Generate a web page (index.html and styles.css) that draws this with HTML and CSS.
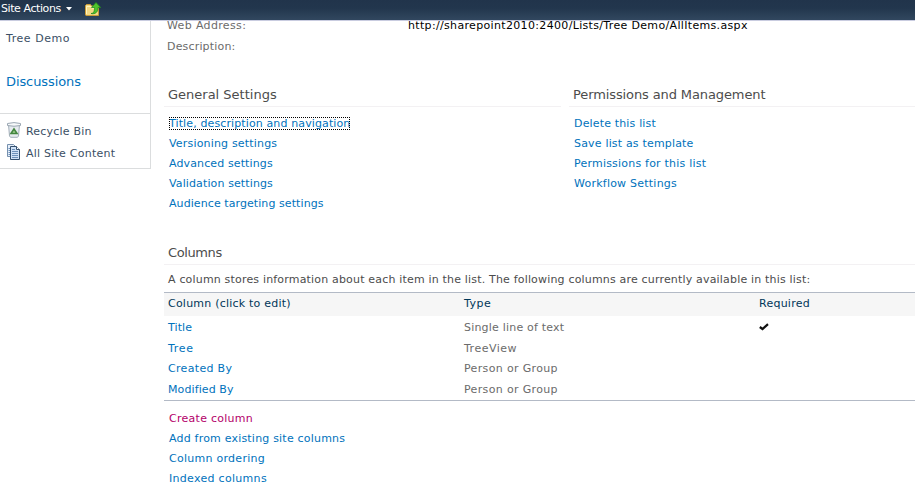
FILE: index.html
```html
<!DOCTYPE html>
<html lang="en">
<head>
<meta charset="utf-8">
<title>List Settings</title>
<link rel="stylesheet" href="styles.css">
</head>
<body>
<header class="ribbon">
  <span class="actions">Site Actions</span>
  <svg class="caret" width="6" height="4" viewBox="0 0 6 4"><path d="M0 0h6L3 3.5z" fill="#fff"/></svg>
  <svg class="up" width="16" height="16" viewBox="0 0 16 16">
    <path d="M.5 14V4.500L1.500 3.500H5.500L6.500 5H13.500V14.500H1z" fill="#f3d883" stroke="#c99b38"/>
    <path d="M1.500 13V5.500H6L7 7H12" fill="none" stroke="#fff3bd"/>
    <path d="M6 12.500C9 12.500 9.500 10 9.500 6.500H6.500L11 1.500 15.700 6.500H13C13 11 10.500 13.500 6 12.500z" fill="#4fc22b" stroke="#228c1e" stroke-width=".8"/>
  </svg>
</header>
<div class="page">
  <nav class="side">
    <a class="demo"><span class="t-demo">Tree Demo</span></a>
    <a class="disc"><span class="t-disc">Discussions</span></a>
    <div class="tools">
      <a class="tool">
        <svg width="16" height="16" viewBox="0 0 16 16">
          <path d="M2.500 2.500L3.500 14 4.500 15.300H11.500L12.500 14 13.500 2.500z" fill="#e6ebef" stroke="#a3afba"/>
          <path d="M1.500 1.500Q8-.3 14.500 1.500V3.500Q8 5 1.500 3.500z" fill="#f7f9fa" stroke="#9aa6b2"/>
          <path d="M5 11.500L8 7 11 11.500z" fill="#a5d294" stroke="#43863f" stroke-width="1.600"/>
        </svg>
        <span class="t-bin">Recycle Bin</span>
      </a>
      <a class="tool">
        <svg width="16" height="16" viewBox="0 0 16 16">
          <path d="M1.500.5H7.500L10.500 3.500V12.500H1.500z" fill="#e6effa" stroke="#7590ae"/>
          <path d="M4.500 2.500H10.500L13.500 5.500V15.500H4.500z" fill="#cfe1f6" stroke="#34506f"/>
          <path d="M10.500 2.500V5.500H13.500" fill="#fff" stroke="#34506f"/>
          <path d="M2.500 4.500H4M2.500 6.500H4M2.500 8.500H4M2.500 10.500H4M6 5.500H9M6 7.500H12M6 9.500H12M6 11.500H12M6 13.500H12" stroke="#6c90ba"/>
        </svg>
        <span class="t-all">All Site Content</span>
      </a>
    </div>
  </nav>
  <main class="main">
    <dl class="info">
      <dt><span class="t-web">Web Address:</span></dt><dd><span class="t-url">http://sharepoint2010:2400/Lists/Tree Demo/AllItems.aspx</span></dd>
      <dt><span class="t-desc">Description:</span></dt><dd></dd>
    </dl>
    <div class="groups">
      <section class="general">
        <h2><span class="t-gen">General Settings</span></h2>
        <ul class="links">
          <li><a class="focus t-title">Title, description and navigation</a></li>
          <li><a class="t-ver">Versioning settings</a></li>
          <li><a class="t-adv">Advanced settings</a></li>
          <li><a class="t-val">Validation settings</a></li>
          <li><a class="t-aud">Audience targeting settings</a></li>
        </ul>
      </section>
      <section class="perms">
        <h2><span class="t-perm">Permissions and Management</span></h2>
        <ul class="links">
          <li><a class="t-del">Delete this list</a></li>
          <li><a class="t-save">Save list as template</a></li>
          <li><a class="t-pfl">Permissions for this list</a></li>
          <li><a class="t-work">Workflow Settings</a></li>
        </ul>
      </section>
    </div>
    <section class="columns">
      <h2><span class="t-cols">Columns</span></h2>
      <p><span class="t-note">A column stores information about each item in the list. The following columns are currently available in this list:</span></p>
      <div class="table">
        <div class="row head"><span><b class="t-click">Column (click to edit)</b></span><span><b class="t-type">Type</b></span><span><b class="t-req">Required</b></span></div>
        <div class="row first"><a><b class="t-ttl">Title</b></a><span><b class="t-single">Single line of text</b></span>
          <span><svg class="check" width="10" height="8" viewBox="0 0 10 8"><path d="M.8 4L3.500 6 9 1.200" fill="none" stroke="#111" stroke-width="2.200"/></svg></span></div>
        <div class="row"><a><b class="t-tree">Tree</b></a><span><b class="t-tv">TreeView</b></span></div>
        <div class="row short"><a><b class="t-cre">Created By</b></a><span><b class="t-pog">Person or Group</b></span></div>
        <div class="row"><a><b class="t-mod">Modified By</b></a><span><b class="t-pog">Person or Group</b></span></div>
      </div>
      <ul class="links bottom">
        <li><a class="hot t-cc">Create column</a></li>
        <li><a class="t-add">Add from existing site columns</a></li>
        <li><a class="t-ord">Column ordering</a></li>
        <li><a class="t-idx">Indexed columns</a></li>
      </ul>
    </section>
  </main>
</div>
</body>
</html>
```

FILE: styles.css
```css
* { box-sizing: border-box; }
body { margin: 0; height: 493px; overflow: hidden; background: #fff; font: 11px/20px Verdana, "DejaVu Sans", sans-serif; color: #4c4c4c; white-space: nowrap; }
h2, p, ul, dl, dd { margin: 0; padding: 0; }
ul { list-style: none; }
b { font-weight: normal; }
a { color: #0072bc; }

.ribbon { height: 21px; display: flex; align-items: flex-start; background: linear-gradient(#21344b, #22364d 40%, #31475f); border-bottom: 1px solid #c9cce0; color: #fff; padding-left: 1px; }
.actions { width: 60px; line-height: 17px; letter-spacing: -.42px; }
.caret { margin: 7px 0 0 5px; }
.up { margin: 1px 0 0 13px; }

.page { display: flex; height: 472px; overflow: hidden; align-items: flex-start; }
.side { width: 151px; height: 148px; border-right: 1px solid #dbddde; border-bottom: 1px solid #dbddde; padding-top: 8px; }
.side a { color: #3b4f65; padding-left: 6px; }
.demo, .disc { display: block; }
.side .disc { color: #0072bc; font-size: 13px; margin-top: 23px; }
.tools { border-top: 1px solid #dbddde; margin-top: 21px; padding-top: 6px; }
.tool { display: flex; height: 22px; line-height: 24px; gap: 4px; }
.tool svg { margin-top: 2px; }

.main { flex: 1; padding-left: 13px; }
.info { display: grid; grid-template-columns: 241px 1fr; grid-template-rows: 21px 21px; margin: -5px 0 0 3px; color: #6b6b6b; }
.info dd { color: #000; }
h2 { font-size: 13px; font-weight: normal; line-height: 20px; padding-left: 4px; height: 22px; border-bottom: 1px solid #f3f1f3; }
.groups { display: flex; gap: 8px; margin-top: 27px; }
.general { width: 397px; }
.perms { flex: 1; }
.links { padding: 7px 0 0 5px; }
.focus { outline: 1px dotted #000; outline-offset: -1px; }
.columns { margin-top: 29px; }
.columns p { padding-left: 4px; margin-top: 5px; height: 22px; }
.table { border-top: 1px solid #b3bac6; border-bottom: 1px solid #b3bac6; height: 109px; }
.row { display: grid; grid-template-columns: 296px 295px 1fr; padding-left: 4px; height: 21px; color: #6b6b6b; line-height: 21px; }
.row.head { height: 23px; background: #f6f6f6; color: #003759; line-height: 22px; margin-bottom: 1px; }
.row.short { height: 20px; line-height: 20px; }
.check { display: block; margin-top: 6px; }
.links.bottom { padding-top: 8px; }
.hot { color: #b4006a; }

/* tracking per label */
.t-demo { letter-spacing: .55px; }
.t-disc { letter-spacing: -.1px; }
.t-bin { letter-spacing: .2px; }
.t-all { letter-spacing: .23px; }
.t-web { letter-spacing: .35px; }
.t-url { letter-spacing: .335px; }
.t-desc { letter-spacing: .17px; }
.t-perm { letter-spacing: -.11px; }
.t-title { letter-spacing: .12px; }
.t-ver { letter-spacing: .18px; }
.t-adv, .t-val { letter-spacing: .12px; }
.t-aud { letter-spacing: .08px; }
.t-del { letter-spacing: .16px; }
.t-save { letter-spacing: .18px; }
.t-pfl { letter-spacing: .21px; }
.t-work { letter-spacing: .23px; }
.t-cols { letter-spacing: -.4px; }
.t-note { letter-spacing: .178px; }
.t-click { letter-spacing: .22px; }
.t-type { letter-spacing: .5px; }
.t-req { letter-spacing: .25px; }
.t-single { letter-spacing: .2px; }
.t-tv { letter-spacing: .5px; }
.t-pog { letter-spacing: .35px; }
.t-ttl { letter-spacing: .1px; }
.t-tree { letter-spacing: .7px; }
.t-cre { letter-spacing: .32px; }
.t-mod { letter-spacing: .1px; }
.t-cc { letter-spacing: .27px; }
.t-add { letter-spacing: .2px; }
.t-ord { letter-spacing: .27px; }
.t-idx { letter-spacing: .3px; }
```
